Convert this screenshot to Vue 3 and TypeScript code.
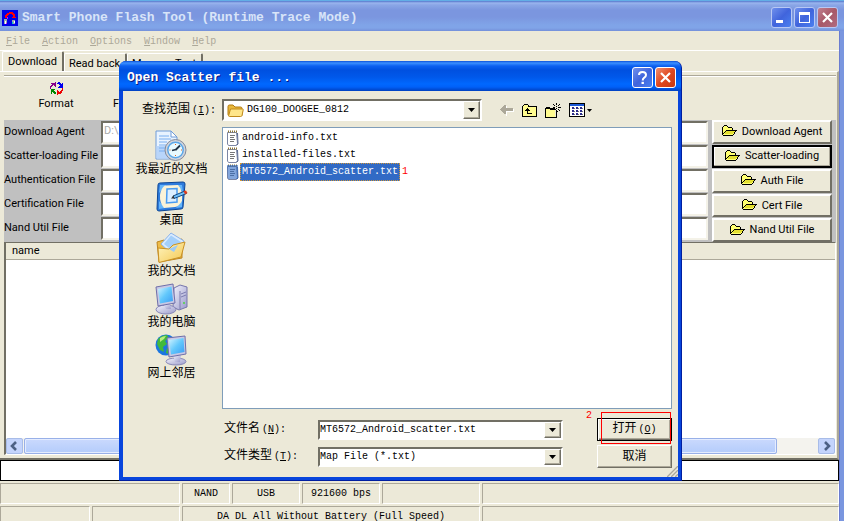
<script setup lang="ts">
import { ref } from 'vue'

interface FileRow { label: string; action: string; value: string }
interface Place { id: string; label: string }

const menus: string[] = ['File', 'Action', 'Options', 'Window', 'Help']
const tabs: string[] = ['Download', 'Read back', 'Memory Test']
const activeTab = ref('Download')

const rows: FileRow[] = [
  { label: 'Download Agent', action: 'Download Agent', value: 'D:\\' },
  { label: 'Scatter-loading File', action: 'Scatter-loading', value: '' },
  { label: 'Authentication File', action: 'Auth File', value: '' },
  { label: 'Certification File', action: 'Cert File', value: '' },
  { label: 'Nand Util File', action: 'Nand Util File', value: '' },
]

const places: Place[] = [
  { id: 'recent', label: '我最近的文档' },
  { id: 'desktop', label: '桌面' },
  { id: 'docs', label: '我的文档' },
  { id: 'computer', label: '我的电脑' },
  { id: 'network', label: '网上邻居' },
]

const files: string[] = ['android-info.txt', 'installed-files.txt', 'MT6572_Android_scatter.txt']
const selected = ref('MT6572_Android_scatter.txt')
</script>

<template>
  <div class="app">
    <header class="titlebar">
      <svg class="app-icon" width="16" height="16" viewBox="0 0 16 16" shape-rendering="crispEdges">
        <rect width="16" height="16" fill="#0000e8" />
        <path d="M3 6V5H4V4H5V3H7V2H11V3H12V4H13V7H14V8H10V7H11V5H10V4H7V5H6V6H5V8H3Z" fill="#f00" />
        <path d="M2 9H5V14H4V11H3V14H2ZM10 10H13V14H10Z" fill="#9aa" />
        <path d="M3 11H4V14H3ZM12 11H13V13H12Z" fill="#fff" />
        <path d="M5 7H6V9H5ZM4 13H5V14H4Z" fill="#d0f" />
        <path d="M10 12H11V14H10Z" fill="#0cc" />
      </svg>
      <h1>Smart Phone Flash Tool (Runtime Trace Mode)</h1>
      <div class="caption">
        <button class="cap" aria-label="Minimize">
          <svg width="19" height="19" viewBox="0 0 19 19"><path d="M4 12h7v3H4z" fill="#fff" /></svg>
        </button>
        <button class="cap" aria-label="Maximize">
          <svg width="19" height="19" viewBox="0 0 19 19"><path d="M4 4h11v11H4zM5 7v7h9V7z" fill="#fff" fill-rule="evenodd" /></svg>
        </button>
        <button class="cap cap-close" aria-label="Close">
          <svg width="19" height="19" viewBox="0 0 19 19"><path d="M5 5l9 9M14 5l-9 9" stroke="#fff" stroke-width="2.2" /></svg>
        </button>
      </div>
    </header>

    <div class="client">
      <nav class="menubar">
        <button v-for="m in menus" :key="m"><u>{{ m[0] }}</u>{{ m.slice(1) }}</button>
      </nav>
      <div class="tabs" role="tablist">
        <button v-for="t in tabs" :key="t" role="tab" :class="{ active: t === activeTab }" @click="activeTab = t">{{ t }}</button>
      </div>

      <main class="page">
        <div class="toolbar">
          <button class="tool">
            <svg width="13" height="13" viewBox="0 0 13 13" shape-rendering="crispEdges">
              <path d="M1 1H5V0H6V5H5V4H4V3H3V4H2V5H1V7H0V4H1V3H2V2H1Z" fill="#808" />
              <path d="M8 0H10V1H11V2H12V1H13V6H8V5H9V4H10V3H9V2H7V1H8Z" fill="#00e" />
              <path d="M12 6H13V9H12V11H11V12H8V13H7V8H8V9H9V10H10V9H11V8H12Z" fill="#e00" />
              <path d="M1 7H5V8H4V9H5V10H6V12H4V11H3V10H2V12H1Z" fill="#080" />
            </svg>
            Format
          </button>
          <button class="tool next"><span class="blank"></span>F</button>
        </div>

        <section class="paths">
          <div class="fields">
            <div v-for="(r, i) in rows" :key="r.label" class="field">
              <label :for="'path-' + i">{{ r.label }}</label>
              <input :id="'path-' + i" type="text" :value="r.value" disabled />
            </div>
          </div>
          <div class="actions">
            <button v-for="(r, i) in rows" :key="r.action" :class="{ focused: i === 1 }">
              <svg width="15" height="11" viewBox="0 0 15 11" shape-rendering="crispEdges">
                <path d="M1 1H5V2H10V5H14V7H13V8H12V9H11V10H1Z" fill="#ffff70" />
                <path d="M4 6H13V7H12V8H11V9H3V8H3V7H4Z" fill="#e4e030" />
                <path d="M2 0H5V1H2ZM1 1H2V2H1ZM0 2H1V10H0ZM5 1H6V2H5ZM6 2H10V3H6ZM10 3H11V5H10ZM4 5H15V6H4ZM3 6H4V7H3ZM2 7H3V8H2ZM1 8H2V9H1ZM1 10H11V11H1ZM13 6H14V7H13ZM12 7H13V9H12ZM11 9H12V10H11Z" fill="#000" />
              </svg>
              {{ r.action }}
            </button>
          </div>
        </section>

        <section class="list">
          <table><thead><tr><th scope="col">name</th></tr></thead></table>
          <div class="list-space"></div>
          <div class="scrollbar">
            <button aria-label="Scroll left"><svg width="15" height="14" viewBox="0 0 15 14"><path d="M9 3L5 7l4 4" fill="none" stroke="#4d6185" stroke-width="2.6" /></svg></button>
            <div class="track"><div class="thumb"></div></div>
            <button aria-label="Scroll right"><svg width="15" height="14" viewBox="0 0 15 14"><path d="M6 3l4 4-4 4" fill="none" stroke="#4d6185" stroke-width="2.6" /></svg></button>
          </div>
        </section>
      </main>

      <div class="progress"></div>
      <footer class="status">
        <div class="status-row first">
          <span></span><span>NAND</span><span>USB</span><span>921600 bps</span><span></span><span></span>
        </div>
        <div class="status-row second">
          <span></span><span></span><span>DA DL All Without Battery (Full Speed)</span><span></span>
        </div>
      </footer>
    </div>

    <section class="dialog" role="dialog" aria-labelledby="dialog-title">
      <header class="dialog-title">
        <h2 id="dialog-title">Open Scatter file ...</h2>
        <div class="caption">
          <button class="cap" aria-label="Help">
            <svg width="19" height="19" viewBox="0 0 19 19"><path d="M6 7Q6 4 9.500 4T13 7Q13 8.600 11 9.800Q9.700 10.600 9.700 12.500" fill="none" stroke="#fff" stroke-width="2" /><path d="M8.500 13.800h2.400v2.200H8.500z" fill="#fff" /></svg>
          </button>
          <button class="cap cap-close" aria-label="Close">
            <svg width="19" height="19" viewBox="0 0 19 19"><path d="M5 5l9 9M14 5l-9 9" stroke="#fff" stroke-width="2.2" /></svg>
          </button>
        </div>
      </header>

      <div class="dialog-body">
        <label class="look-label" for="look-in">查找范围<span class="key">(<u>I</u>):</span></label>
        <div class="look">
          <div class="combo look-combo">
            <svg width="17" height="15" viewBox="0 0 17 15">
              <path d="M1 3.500Q1 2 2.500 2H6L8 4H13.500Q15 4 15 5.500V12.500H2Q1 12.500 1 11.500Z" fill="#e9b83a" stroke="#b27a10" />
              <path d="M3.500 6H15.500Q16.500 6 16.200 7L15 12.500Q14.800 13.500 13.500 13.500H2.500Q1.500 13.500 1.700 12.500Z" fill="#ffe68a" stroke="#c08a1c" />
            </svg>
            <select id="look-in"><option>DG100_DOOGEE_0812</option></select>
            <span class="arrow"><svg width="7" height="4" viewBox="0 0 7 4"><path d="M0 0h7L3.500 4z" /></svg></span>
          </div>
          <div class="nav">
            <button aria-label="Back" disabled>
              <svg width="14" height="12" viewBox="0 0 14 12" shape-rendering="crispEdges"><path d="M2 6H3V5H4V4H5V3H6V2H7V5H14V8H7V12H6V10H5V9H4V8H3V7H2Z" fill="#fff" /><path d="M0 5H1V4H2V3H3V2H4V1H6V4H13V7H6V10H4V9H3V8H2V7H1V6H0Z" fill="#aca899" /></svg>
            </button>
            <button aria-label="Up one level">
              <svg width="15" height="13" viewBox="0 0 15 13" shape-rendering="crispEdges"><path d="M1 1H7V3H14V12H1Z" fill="#fffb90" /><path d="M2 0H6V1H7V2H15V13H0V2H1V1H2ZM2 1V2H1V12H14V3H6V1ZM5 4H6V5H7V6H8V7H6V9H10V10H5V7H3V6H4V5H5Z" fill="#000" fill-rule="evenodd" /></svg>
            </button>
            <button aria-label="New folder">
              <svg width="16" height="15" viewBox="0 0 16 15" shape-rendering="crispEdges"><path d="M1 5H10V14H1Z" fill="#fffb90" /><path d="M1 4H5V5H10V6H11V7H12V15H0V5H1ZM1 6V14H11V7H5V6Z" fill="#000" fill-rule="evenodd" /><path d="M11 0H12V2H11ZM8 1H9V2H8ZM9 2H10V3H9ZM14 1H15V2H14ZM13 2H14V3H13ZM11 3H12V4H11ZM8 4H10V5H8ZM13 4H16V5H13ZM11 5H12V6H11ZM13 6H14V7H13ZM14 7H15V8H14ZM12 8H13V9H12Z" /></svg>
            </button>
            <button class="views" aria-label="Views">
              <svg width="16" height="14" viewBox="0 0 16 14" shape-rendering="crispEdges"><path d="M0 0H16V14H0Z" /><path d="M1 3H15V13H1Z" fill="#fff" /><path d="M1 1H15V3H1Z" fill="#1c5ad8" /><path d="M3 4h2v2H3zM7 4h2v2H7zM11 4h2v2h-2zM3 7h2v2H3zM7 7h2v2H7zM11 7h2v2h-2zM3 10h2v2H3zM7 10h2v2H7zM11 10h2v2h-2z" fill="#2c2c8c" /><path d="M5 5h1v1H5zM9 5h1v1H9zM13 5h1v1h-1zM5 8h1v1H5zM9 8h1v1H9zM13 8h1v1h-1zM5 11h1v1H5zM9 11h1v1H9zM13 11h1v1h-1z" fill="#777" /></svg>
              <svg width="5" height="3" viewBox="0 0 5 3"><path d="M0 0h5L2.500 3z" /></svg>
            </button>
          </div>
        </div>

        <nav class="places">
          <button v-for="p in places" :key="p.id">
            <svg width="34" height="32" viewBox="0 0 34 32">
              <defs>
                <linearGradient :id="p.id + '-screen'" x1="0" y1="0" x2="1" y2="1"><stop offset="0" stop-color="#d4f4ff" /><stop offset=".5" stop-color="#62c8fc" /><stop offset="1" stop-color="#3b9cf4" /></linearGradient>
                <linearGradient :id="p.id + '-metal'" x1="0" y1="0" x2="1" y2="1"><stop offset="0" stop-color="#f4f4fc" /><stop offset="1" stop-color="#9a9acb" /></linearGradient>
                <linearGradient :id="p.id + '-gold'" x1="0" y1="0" x2="1" y2="1"><stop offset="0" stop-color="#fff6c4" /><stop offset="1" stop-color="#f4c850" /></linearGradient>
              </defs>
              <g v-if="p.id === 'recent'">
                <path d="M2 1H17L23 7V29H2Z" fill="#e8f3ff" stroke="#6e9bd8" />
                <path d="M2.500 16H23V28.500H2.500Z" fill="#b8d5fa" />
                <path d="M17 1V7H23Z" fill="#fff" stroke="#6e9bd8" />
                <path d="M5 6H15M5 9H17M5 12H13M5 15H12M5 18H11M5 21H11" stroke="#78aef0" />
                <circle cx="21.500" cy="20" r="10.500" fill="#d0d4dc" stroke="#858b9a" />
                <circle cx="21.500" cy="20" r="7.700" fill="#e8faff" stroke="#5aa6e8" stroke-width="1.500" />
                <path d="M21.500 20L26 15.500M18 20.500L22 19.500" stroke="#234" stroke-width="1.800" />
                <path d="M21 14h1v1h-1zM21 25h1v1h-1zM15.500 19.500h1v1h-1zM27 19.500h1v1h-1z" fill="#e06020" />
              </g>
              <g v-else-if="p.id === 'desktop'">
                <path d="M5 2L28 1Q30 1 30 3L28 26Q28 28 26 28L4 30Q2 30 2 28L3 4Q3 2 5 2Z" fill="#2e7bdc" stroke="#0c4796" />
                <path d="M5 4H11L4 12ZM27 4H21L28 11ZM4 28L10 27L4 20ZM27 26L21 27L27 20Z" fill="#65b6fb" />
                <path d="M10 4.500L23 4Q28 9 27 20Q24 25.500 20 26L9 27Q4.500 22 5 14Q6 7 10 4.500Z" fill="#faf3d8" />
                <path d="M12 8L22 7.500V21L11.500 22Z" fill="#dcefff" stroke="#4a9cf0" stroke-width="1.500" />
                <path d="M18 15L30 10L31.500 12.500L19 17.500Z" fill="#6ec0fa" stroke="#174a82" />
                <path d="M28.500 10L31 9.500L32.500 12L30 13.500Z" fill="#df3b1c" />
                <path d="M16 17.500L18.500 14.500L19.500 17.500Z" fill="#333" />
              </g>
              <g v-else-if="p.id === 'docs'">
                <path d="M3 10L10 8L12 10L28 7V26L5 30Z" fill="#eebc48" stroke="#bd8520" />
                <path d="M17 1L30 9L20 24L7 12Z" fill="#d9ebff" stroke="#8ab3ea" />
                <path d="M17 3.500L27 10L20 20L10 12Z" fill="#a3cffa" />
                <path d="M4 16L15 17L19 13L31 10L27 25L5 30.500Z" :fill="`url(#${p.id}-gold)`" stroke="#c99124" />
                <path d="M15 17L24 13L20 20Z" fill="#9ccaf5" />
              </g>
              <g v-else-if="p.id === 'computer'">
                <path d="M20 5L26 2L33 4V24L25 27L19 24Z" :fill="`url(#${p.id}-metal)`" stroke="#7676ac" />
                <path d="M26 8V26M27 11L32 9M27 14L32 12" stroke="#7c7cb0" />
                <path d="M29 19h2v2h-2z" fill="#6c6" />
                <ellipse cx="12" cy="26.500" rx="10" ry="4.500" :fill="`url(#${p.id}-metal)`" stroke="#8888b8" />
                <path d="M9 20H16L17 26H12Z" :fill="`url(#${p.id}-metal)`" />
                <path d="M2 4L19 1L21 20L4 23Z" fill="#c9c9e4" stroke="#6f6faa" />
                <path d="M4 6L17.500 3.500L19 18L6 20.500Z" :fill="`url(#${p.id}-screen)`" />
              </g>
              <g v-else>
                <circle cx="12" cy="11" r="10.500" fill="#1c76e0" />
                <path d="M4 5Q8 1 13 1L15 4L11 7L13 10L9 13L10 18L6 16L3 10ZM13 14L17 16L15 20L12 19Z" fill="#42b93c" />
                <path d="M6 4Q9 2 12 2L10 5L6 8Z" fill="#b9ec80" />
                <ellipse cx="22" cy="27.500" rx="10" ry="3.500" :fill="`url(#${p.id}-metal)`" stroke="#8888b8" />
                <path d="M19 21H27L26 28H21Z" :fill="`url(#${p.id}-metal)`" />
                <path d="M13 4L31 2L32 20L15 23Z" fill="#c9c9e4" stroke="#6f6faa" />
                <path d="M15 6L29.500 4L30.500 18L17 20.500Z" :fill="`url(#${p.id}-screen)`" />
              </g>
            </svg>
            {{ p.label }}
          </button>
        </nav>

        <ul class="files" role="listbox" aria-label="Files">
          <li v-for="f in files" :key="f" role="option" :aria-selected="f === selected" :class="{ selected: f === selected }" @click="selected = f">
            <svg width="13" height="16" viewBox="0 0 13 16">
              <path d="M1.500 2.500H10.500L11.500 13.500L10 15.500H2.500L1.500 14Z" fill="#fff" stroke="#7c86a4" />
              <path d="M11.500 3L12 14L10.500 15.500" fill="none" stroke="#586890" />
              <path d="M2 1.500H11" stroke="#8c7434" stroke-width="2" stroke-dasharray="1 1" />
              <path d="M4 5.500H9M4 7.500H8M4 9.500H9M4 11.500H8" stroke="#777" />
              <path v-if="f === selected" d="M1 1H12V15H2Z" fill="#316ac5" opacity=".6" />
            </svg>
            <span class="name">{{ f }}</span>
            <span v-if="f === selected" class="mark">1</span>
          </li>
        </ul>

        <form class="bottom" @submit.prevent>
          <label for="file-name">文件名<span class="key">(<u>N</u>):</span></label>
          <div class="combo">
            <input id="file-name" type="text" :value="selected" />
            <button type="button" class="arrow" aria-label="Recent names"><svg width="7" height="4" viewBox="0 0 7 4"><path d="M0 0h7L3.500 4z" /></svg></button>
          </div>
          <div class="open-cell">
            <button class="push default" type="submit">打开<span class="key">(<u>O</u>)</span></button>
            <span class="highlight"></span>
            <span class="mark step">2</span>
          </div>
          <label for="file-type">文件类型<span class="key">(<u>T</u>):</span></label>
          <div class="combo">
            <select id="file-type"><option>Map File (*.txt)</option></select>
            <span class="arrow"><svg width="7" height="4" viewBox="0 0 7 4"><path d="M0 0h7L3.500 4z" /></svg></span>
          </div>
          <button class="push" type="button">取消</button>
        </form>
      </div>
      <svg class="grip" width="12" height="12" viewBox="0 0 12 12"><path d="M0 12L12 0M4 12L12 4M8 12L12 8" stroke="#fff" /><path d="M1 12L12 1M5 12L12 5M9 12L12 9" stroke="#aca899" stroke-width="1.500" /></svg>
    </section>
  </div>
</template>

<style>
html, body { margin: 0; background: #7a96df; }
</style>

<style scoped>
.app, .app * { box-sizing: border-box; }
.app {
  --face: #ece9d8;
  --shadow: #aca899;
  --dark: #716f64;
  --mono: "Liberation Mono", "Noto Sans CJK SC", monospace;
  --sans: Roboto, "Noto Sans CJK SC", sans-serif;
  position: relative;
  display: flex;
  flex-direction: column;
  height: 100vh;
  overflow: hidden;
  font: 10px/12px var(--mono);
  color: #000;
}
button, input, select { font: inherit; color: inherit; border: 0; padding: 0; margin: 0; background: none; border-radius: 0; outline: 0; }
button { cursor: default; }
select { appearance: none; }
svg { display: block; flex: none; }
h1, h2 { margin: 0; font: bold 13px/16px var(--mono); }

.titlebar {
  display: flex;
  align-items: center;
  gap: 4px;
  height: 31px;
  padding: 3px 6px 0 2px;
  border-top: 1px solid #62aee6;
  background: linear-gradient(#5577cc 0, #9ab5ee 2px, #8aa6e6 4px, #7b96df 9px, #7b96df 16px, #80a4e8 24px, #80a4e8 27px, #7490da 30px);
  flex: none;
}
h1 { flex: 1; color: #d8e4f8; }
.caption { display: flex; gap: 2px; }
.cap {
  width: 21px;
  height: 21px;
  border: 1px solid #b8c8f4;
  border-radius: 3px;
  background: linear-gradient(135deg, #7090ec, #4064dc 50%, #4a80f0);
}
.cap-close { background: linear-gradient(135deg, #c08090, #a85868 50%, #b06c80); }

.client {
  display: flex;
  flex: 1;
  flex-direction: column;
  min-height: 0;
  background: var(--face);
  border-right: 1px solid #6a7cd0;
  margin-right: 4px;
}
.menubar { display: flex; gap: 12px; height: 20px; padding: 4px 6px 0; border-bottom: 1px solid #fff; color: var(--shadow); flex: none; }
.menubar button { height: 14px; }
.tabs { display: flex; align-items: flex-end; height: 20px; padding-left: 2px; font: 11px/14px var(--sans); flex: none; }
.tabs button { height: 18px; padding: 2px 5px 0 4px; border-top: 1px solid #fff; border-left: 1px solid #fff; border-right: 2px solid var(--dark); border-radius: 2px 2px 0 0; }
.tabs .active { height: 20px; padding: 0 5px; }
.page { display: flex; flex: 1; flex-direction: column; min-height: 0; border-top: 1px solid #fff; border-right: 2px solid var(--shadow); border-bottom: 2px solid var(--dark); padding: 3px 1px 3px 4px; font: 11px/14px var(--sans); }
.toolbar { display: flex; height: 45px; border-top: 1px solid var(--shadow); box-shadow: inset 0 1px #fff; flex: none; }
.tool { display: flex; flex-direction: column; align-items: center; gap: 2px; width: 104px; padding-top: 6px; }
.next { width: 16px; }
.blank { height: 13px; }
.paths { display: flex; gap: 4px; height: 122px; padding-right: 4px; background: #c0c0c0; flex: none; }
.fields { display: flex; flex: 1; flex-direction: column; padding-bottom: 2px; }
.field { display: flex; flex: 1; align-items: center; }
.field label { width: 97px; white-space: nowrap; }
.field input { flex: 1; min-width: 0; height: 23px; padding: 0 2px 3px 1px; background: #fff; border: 2px solid; border-color: var(--dark) #f4f2e8 #f4f2e8 var(--dark); color: #aaa; }
.actions { display: flex; flex-direction: column; gap: 1px; width: 120px; }
.actions button { display: flex; flex: 1; align-items: center; justify-content: center; gap: 5px; background: var(--face); border: 2px solid; border-color: #fff var(--dark) var(--dark) #fff; }
.actions svg { margin-bottom: 2px; }
.actions .focused { border-color: #000; box-shadow: inset -1px -1px var(--shadow), inset 1px 1px #fff; }
.list { display: flex; flex: 1; flex-direction: column; min-height: 0; background: #fff; border: 1px solid var(--dark); border-left-width: 2px; border-right-color: #fff; border-bottom-color: #fff; }
.list table { width: 100%; border-collapse: collapse; background: var(--face); }
.list th { height: 16px; padding: 1px 0 0 6px; border-bottom: 1px solid var(--shadow); font-weight: 400; text-align: left; }
.list-space { flex: 1; }
.scrollbar { display: flex; height: 16px; background: #f4f3ee; flex: none; }
.scrollbar button { width: 17px; border: 1px solid #a8bce8; border-radius: 2px; background: #c4d4fc; }
.track { flex: 1; padding: 0 1px; }
.thumb { width: 95%; height: 16px; background: linear-gradient(#cad9fd, #b4ccfb); border: 1px solid #98b0e8; box-shadow: inset 0 0 0 1px #e4ecff; border-radius: 2px; }
.progress { height: 21px; border: 1px solid #000; background: #fff; flex: none; }
.status { padding-top: 2px; flex: none; }
.status-row { display: grid; column-gap: 2px; margin-bottom: 2px; }
.first { grid-template-columns: 180px 48px 68px 78px 98px 1fr; }
.second { grid-template-columns: 90px 88px 298px 1fr; height: 15px; margin-bottom: 0; overflow: hidden; }
.status-row span { height: 21px; border: 1px solid; border-color: var(--shadow) #fff #fff var(--shadow); text-align: center; line-height: 20px; white-space: nowrap; }

.dialog {
  position: absolute;
  inset: 61px 162px 40px 119px;
  display: flex;
  flex-direction: column;
  background: #0845dc;
  border-radius: 7px 7px 0 0;
  border-bottom: 1px solid #001ea0;
  border-right: 1px solid #001ea0;
}
.dialog-title {
  display: flex;
  align-items: center;
  height: 30px;
  padding: 3px 5px 0 8px;
  border-radius: 7px 7px 0 0;
  background: linear-gradient(#0c50d8 0, #3c90ff 2px, #0c60f0 5px, #0050e0 9px, #0058ea 16px, #0068ff 23px, #0060f8 26px, #0040c0 30px);
  flex: none;
}
.dialog-title h2 { flex: 1; color: #fff; text-shadow: 1px 1px #0a1883; }
.dialog .cap { border-color: #fff; }
.dialog .cap-close { background: linear-gradient(135deg, #f09070, #e04820 50%, #c83810); }
.dialog-body {
  display: grid;
  flex: 1;
  grid-template-columns: 99px 1fr;
  grid-template-rows: 22px 1fr 59px;
  row-gap: 6px;
  min-height: 0;
  margin: 0 3px 3px 4px;
  padding: 8px 6px 3px 0;
  background: var(--face);
}
.look-label, .bottom label, .places, .push { font-size: 12px; line-height: 16px; }
.key { font-size: 10px; margin-left: 2px; }
.look-label { align-self: center; padding-left: 19px; white-space: nowrap; }
.look { display: flex; min-width: 0; }
.combo { display: flex; align-items: stretch; min-width: 0; height: 20px; background: #fff; border: 2px solid; border-color: var(--dark) #fff #fff var(--dark); }
.look-combo { width: 260px; height: 22px; align-items: center; padding-left: 3px; gap: 3px; }
.combo input, .combo select { flex: 1; min-width: 0; width: 0; }
.arrow { display: flex; align-items: center; justify-content: center; align-self: stretch; width: 17px; background: var(--face); border: 1px solid; border-color: #fff var(--dark) var(--dark) #fff; box-shadow: inset -1px -1px var(--shadow); }
.nav { display: flex; align-items: center; gap: 8px; padding-left: 18px; }
.nav .views { display: flex; align-items: center; gap: 2px; }
.places { grid-row: 2 / 4; display: flex; flex-direction: column; gap: 2px; align-items: center; padding: 3px 2px 0 0; }
.places button { display: flex; flex-direction: column; align-items: center; height: 49px; }
.files { margin: 0; padding: 1px 3px; list-style: none; background: #fff; border: 1px solid #7f9db9; }
.files li { display: flex; align-items: center; gap: 1px; height: 17px; }
.name { padding: 2px 1px; border: 1px solid transparent; }
.selected .name { background: #316ac5; border: 1px dotted #ce953a; color: #fff; }
.mark { color: #f00; }
.files .mark { padding-left: 1px; }
.bottom { display: grid; grid-template-columns: 96px 1fr 75px; grid-template-rows: 23px 23px; gap: 4px 0; align-items: center; padding-top: 3px; }
.bottom label { padding-left: 2px; }
.bottom .combo { margin-right: 34px; }
.open-cell { position: relative; display: flex; }
.push { width: 100%; height: 23px; background: var(--face); border: 1px solid; border-color: #fff var(--dark) var(--dark) #fff; box-shadow: inset -1px -1px var(--shadow); }
.push.default { border: 1px solid #000; box-shadow: inset 1px 1px #fff, inset -1px -1px var(--dark), inset -2px -2px var(--shadow); }
.highlight { position: absolute; inset: -6px 1px -3px 4px; border: 1px solid #f00; pointer-events: none; }
.step { position: absolute; left: -11px; top: -8px; }
.grip { position: absolute; right: 3px; bottom: 3px; }
</style>
